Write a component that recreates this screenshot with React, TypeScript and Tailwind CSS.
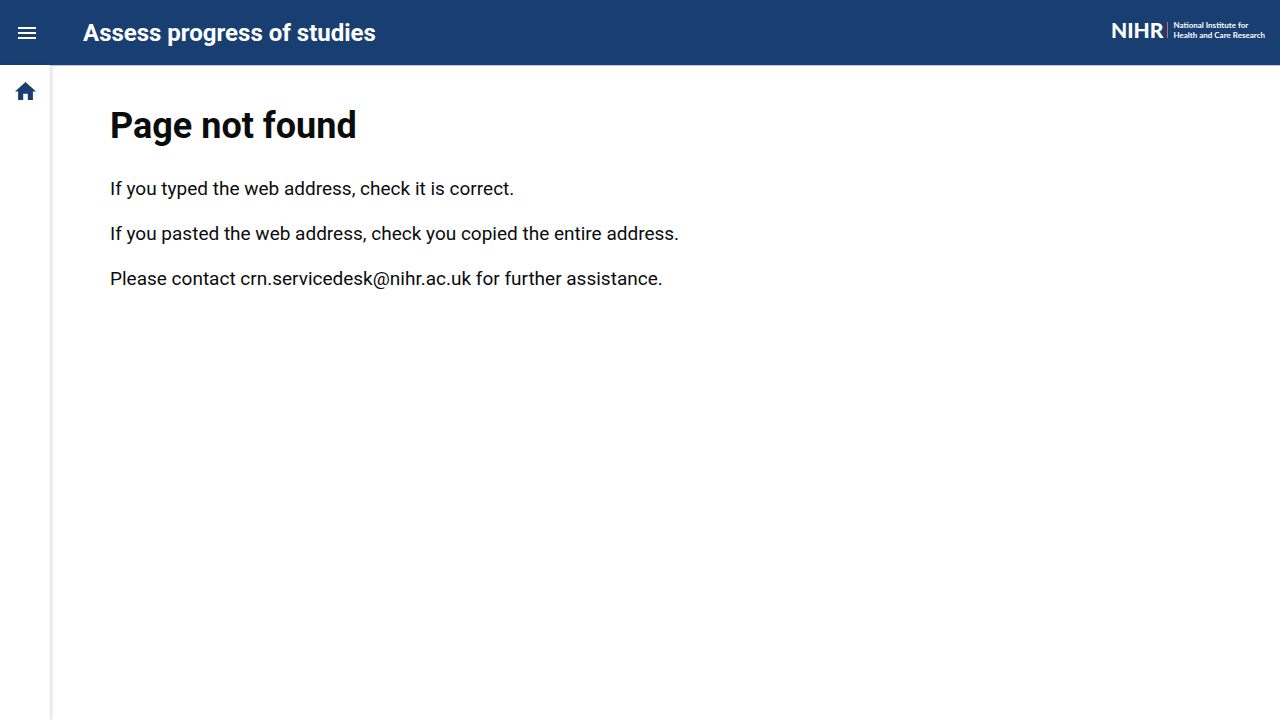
import { MdMenu } from "react-icons/md";

function HomeIcon() {
  return (
    <svg viewBox="0 0 21 18" className="h-[18px] w-[21px]" fill="currentColor" aria-hidden="true">
      <path d="M8.200 18v-6.200h4.600V18h5.100V9.500H21L10.500 0 0 9.500h3.100V18z" />
    </svg>
  );
}

function Logo() {
  return (
    <a href="#" className="flex items-center font-['Lato',sans-serif] whitespace-nowrap text-white">
      <span className="text-[21px] leading-4 font-black">NIHR</span>
      <span className="ml-1 h-4 w-px bg-[#ea5d4e]" />
      <span className="ml-[5px] flex flex-col text-[8px] leading-[10px] font-bold">
        <span>National Institute for</span>
        <span>Health and Care Research</span>
      </span>
    </a>
  );
}

export default function App() {
  return (
    <div className="flex min-h-screen flex-col bg-white font-['Roboto',sans-serif] text-[#0b0c0c]">
      <header className="flex h-[65px] items-center bg-[#193e72] pr-[15px] text-white">
        <button type="button" aria-label="Open menu" className="ml-[15px] flex">
          <MdMenu className="size-6" />
        </button>
        <p className="ml-11 text-2xl font-bold">Assess progress of studies</p>
        <div className="ml-auto pb-[5px]">
          <Logo />
        </div>
      </header>
      <div className="flex flex-1">
        <nav aria-label="Main" className="z-10 w-[50px] shrink-0 bg-white shadow-[2px_0_3px_rgba(0,0,0,0.12)]">
          <a href="#" aria-label="Home" className="flex justify-center py-[17px] text-[#193e72]">
            <HomeIcon />
          </a>
        </nav>
        <main className="flex-1 border-t border-[#bccce4] px-[60px] pt-9">
          <h1 className="text-4xl leading-[48px] font-bold">Page not found</h1>
          <div className="mt-[26px] flex flex-col gap-5 text-[19px] leading-[25px]">
            <p>If you typed the web address, check it is correct.</p>
            <p>If you pasted the web address, check you copied the entire address.</p>
            <p>Please contact crn.servicedesk@nihr.ac.uk for further assistance.</p>
          </div>
        </main>
      </div>
    </div>
  );
}
